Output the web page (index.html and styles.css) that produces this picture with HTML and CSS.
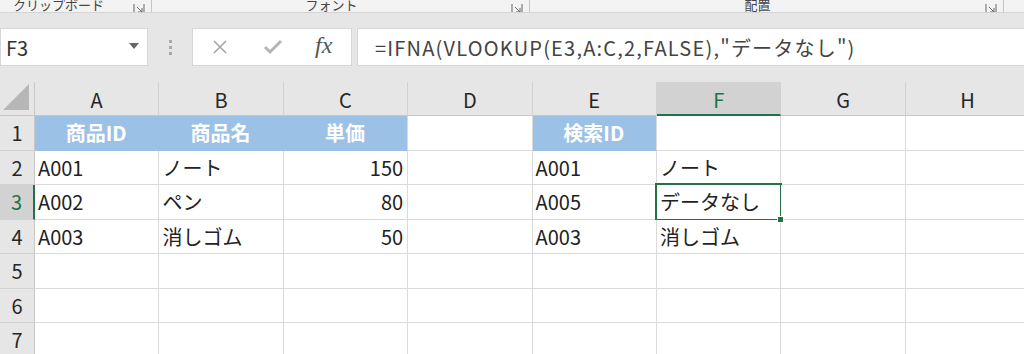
FILE: index.html
```html
<!DOCTYPE html>
<html lang="ja">

<head>
  <meta charset="UTF-8">
  <title>IFNA VLOOKUP</title>
  <meta name="viewport" content="width=device-width,initial-scale=1">
  <link rel="stylesheet" href="styles.css">
</head>

<body>
  <div class="ribbon">
    <div class="group g-clip">
      <span class="glabel">クリップボード</span>
      <svg class="launch" viewBox="0 0 12 12"><path d="M1 1v10h10V1" fill="none" stroke="#666" /><path d="M4 4l5 5M9 5v4H5" fill="none" stroke="#666" /></svg>
    </div>
    <div class="group g-font">
      <span class="glabel">フォント</span>
      <svg class="launch" viewBox="0 0 12 12"><path d="M1 1v10h10V1" fill="none" stroke="#666" /><path d="M4 4l5 5M9 5v4H5" fill="none" stroke="#666" /></svg>
    </div>
    <div class="group g-align">
      <span class="glabel">配置</span>
      <svg class="launch" viewBox="0 0 12 12"><path d="M1 1v10h10V1" fill="none" stroke="#666" /><path d="M4 4l5 5M9 5v4H5" fill="none" stroke="#666" /></svg>
    </div>
  </div>

  <div class="fbar">
    <div class="namebox">
      <span>F3</span>
      <svg class="caret" viewBox="0 0 10 6"><path d="M0 0h10L5 6z" fill="#666" /></svg>
    </div>
    <div class="grip"><i></i><i></i><i></i></div>
    <div class="fbtns">
      <svg class="ico" viewBox="0 0 16 16"><path d="M2 2l12 12M14 2L2 14" stroke="#a6a6a6" stroke-width="1.6" /></svg>
      <svg class="ico" viewBox="0 0 20 16"><path d="M2 8l5 5L18 2" fill="none" stroke="#b4b4b4" stroke-width="3" /></svg>
      <span class="fx">fx</span>
    </div>
    <div class="finput">=IFNA(VLOOKUP(E3,A:C,2,FALSE),"データなし")</div>
  </div>

  <div class="sheet">
    <!-- column headers -->
    <div class="corner">
      <svg viewBox="0 0 30 30"><path d="M28 2V28H2z" fill="#b7b7b7" /></svg>
    </div>
    <div class="ch">A</div>
    <div class="ch">B</div>
    <div class="ch">C</div>
    <div class="ch">D</div>
    <div class="ch">E</div>
    <div class="ch sel">F</div>
    <div class="ch">G</div>
    <div class="ch">H</div>

    <!-- row 1 -->
    <div class="rh">1</div>
    <div class="c head">商品ID</div>
    <div class="c head">商品名</div>
    <div class="c head last">単価</div>
    <div class="c"></div>
    <div class="c head last">検索ID</div>
    <div class="c"></div>
    <div class="c"></div>
    <div class="c"></div>

    <!-- row 2 -->
    <div class="rh">2</div>
    <div class="c">A001</div>
    <div class="c">ノート</div>
    <div class="c num">150</div>
    <div class="c"></div>
    <div class="c">A001</div>
    <div class="c">ノート</div>
    <div class="c"></div>
    <div class="c"></div>

    <!-- row 3 -->
    <div class="rh sel">3</div>
    <div class="c">A002</div>
    <div class="c">ペン</div>
    <div class="c num">80</div>
    <div class="c"></div>
    <div class="c">A005</div>
    <div class="c active">データなし<span class="handle"></span></div>
    <div class="c"></div>
    <div class="c"></div>

    <!-- row 4 -->
    <div class="rh">4</div>
    <div class="c">A003</div>
    <div class="c">消しゴム</div>
    <div class="c num">50</div>
    <div class="c"></div>
    <div class="c">A003</div>
    <div class="c">消しゴム</div>
    <div class="c"></div>
    <div class="c"></div>

    <!-- rows 5-7 -->
    <div class="rh">5</div>
    <div class="c"></div><div class="c"></div><div class="c"></div><div class="c"></div>
    <div class="c"></div><div class="c"></div><div class="c"></div><div class="c"></div>
    <div class="rh">6</div>
    <div class="c"></div><div class="c"></div><div class="c"></div><div class="c"></div>
    <div class="c"></div><div class="c"></div><div class="c"></div><div class="c"></div>
    <div class="rh">7</div>
    <div class="c"></div><div class="c"></div><div class="c"></div><div class="c"></div>
    <div class="c"></div><div class="c"></div><div class="c"></div><div class="c"></div>
  </div>
</body>

</html>
```

FILE: styles.css
```css
* {
  box-sizing: border-box;
  margin: 0;
  padding: 0;
  font-family: "Noto Sans CJK JP", "Noto Sans", sans-serif
}

:root {
  --bg: #e6e6e6;
  --line: #dadada;
  --hdr-line: #c8c8c8;
  --blue: #9bc2e6;
  --green: #217346;
  --text: #222
}

body {
  width: 1024px;
  height: 354px;
  overflow: hidden;
  background: var(--bg);
  color: var(--text)
}

/* ribbon group labels, scrolled so only their lower half shows */
.ribbon {
  height: 13px;
  background: #f3f3f3;
  border-bottom: 1px solid #d4d4d4;
  display: flex;
  overflow: hidden
}

.group {
  display: flex;
  align-items: flex-end;
  height: 12px;
  border-right: 1px solid #c6c6c6;
  position: relative
}

.g-clip {
  width: 152px
}

.g-font {
  width: 378px
}

.g-align {
  width: 474px
}

.glabel {
  flex: 1;
  text-align: center;
  font-size: 13px;
  line-height: 13px;
  color: #444;
  margin-bottom: 1px;
  white-space: nowrap
}

.g-clip .glabel {
  padding-right: 16px
}

.launch {
  width: 12px;
  height: 12px;
  margin: 0 6px -3px 0
}

/* formula bar */
.fbar {
  display: flex;
  height: 38px;
  margin-top: 15px
}

.namebox {
  width: 148px;
  background: #fff;
  border: 1px solid #d6d6d6;
  display: flex;
  align-items: center;
  justify-content: space-between;
  padding: 0 8px 0 5px;
  font-size: 20px;
  color: #333
}

.caret {
  width: 10px;
  height: 6px;
  margin-bottom: 3px
}

.grip {
  width: 44px;
  display: flex;
  flex-direction: column;
  align-items: center;
  justify-content: center;
  gap: 3px
}

.grip i {
  width: 3px;
  height: 3px;
  background: #a8a8a8
}

.fbtns {
  width: 160px;
  background: #fff;
  border: 1px solid #d6d6d6;
  display: flex;
  align-items: center;
  padding-left: 19px
}

.ico {
  width: 16px;
  height: 16px
}

.ico+.ico {
  width: 22px;
  margin-left: 34px
}

.fx {
  margin-left: 31px;
  font-family: "Liberation Serif", serif;
  font-style: italic;
  font-size: 24px;
  color: #555;
  margin-top: -4px
}

.finput {
  flex: 1;
  margin-left: 5px;
  background: #fff;
  border: 1px solid #d6d6d6;
  border-right: none;
  display: flex;
  align-items: center;
  padding-left: 17px;
  font-size: 20px;
  letter-spacing: 1.2px;
  color: #444;
  white-space: nowrap
}

/* sheet grid */
.sheet {
  margin-top: 16px;
  display: grid;
  grid-template-columns: 35px repeat(8, 124.4px);
  grid-template-rows: 34px repeat(7, 34.5px);
  font-size: 20px
}

.corner {
  background: var(--bg);
  border-right: 1px solid var(--hdr-line);
  border-bottom: 1px solid var(--hdr-line);
  display: flex;
  align-items: flex-end;
  justify-content: flex-end;
  padding: 0 3px 3px 0
}

.corner svg {
  width: 30px;
  height: 30px
}

.ch {
  background: var(--bg);
  border-right: 1px solid #d2d2d2;
  border-bottom: 1px solid var(--hdr-line);
  display: flex;
  align-items: center;
  justify-content: center;
  color: #262626;
  padding-top: 2px
}

.ch.sel {
  background: #d2d2d2;
  color: var(--green);
  border-bottom: 2px solid var(--green)
}

.rh {
  background: var(--bg);
  border-right: 1px solid var(--hdr-line);
  border-bottom: 1px solid #d2d2d2;
  display: flex;
  align-items: center;
  justify-content: center;
  color: #262626
}

.rh.sel {
  background: #d2d2d2;
  color: var(--green);
  border-right: 2px solid var(--green)
}

.c {
  background: #fff;
  border-right: 1px solid var(--line);
  border-bottom: 1px solid var(--line);
  display: flex;
  align-items: center;
  padding: 0 4px 0 3px;
  white-space: nowrap;
  position: relative
}

.c.num {
  justify-content: flex-end
}

.c.head {
  background: var(--blue);
  border-right-color: var(--blue);
  border-bottom-color: var(--blue);
  color: #fff;
  font-weight: 700;
  justify-content: center
}

.c.head.last {
  border-right-color: var(--line)
}

.c.active::before {
  content: "";
  position: absolute;
  top: -2px;
  left: -2px;
  right: -2px;
  bottom: -2px;
  border: 2px solid var(--green)
}

.handle {
  position: absolute;
  right: -4px;
  bottom: -4px;
  width: 7px;
  height: 7px;
  background: var(--green);
  border: 1px solid #fff;
  z-index: 2
}
```
